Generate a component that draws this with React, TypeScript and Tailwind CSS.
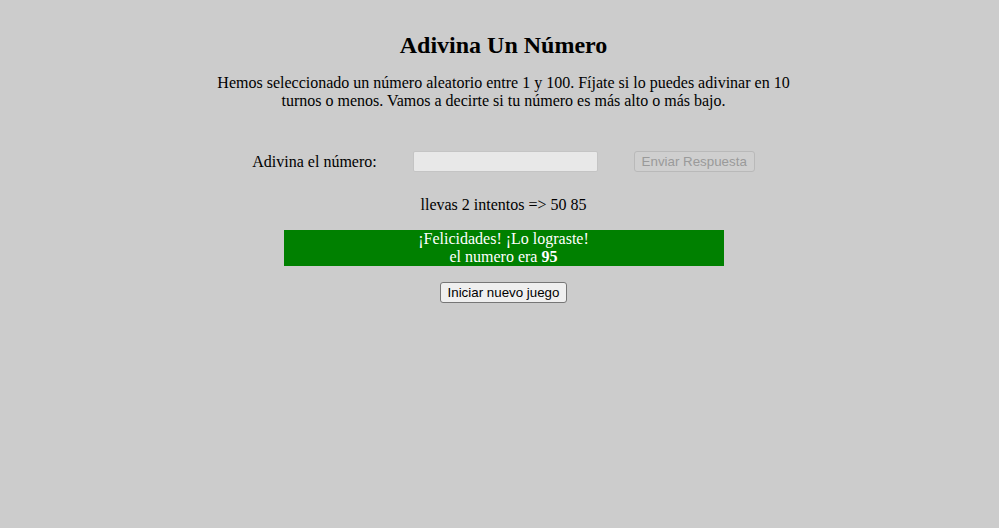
import React from "react";

export default function App() {
  return (
    <div
      className="min-h-[528px] w-full bg-[#cccccc] pl-2 text-black"
      style={{ fontFamily: '"Liberation Serif", "Times New Roman", serif' }}
    >
      <div className="flex flex-col items-center pt-[31px]">
        <h1 className="text-[24px] font-bold leading-[28px]">Adivina Un Número</h1>
        <p className="mt-[15px] w-[600px] text-center text-[16px] leading-[18px]">
          Hemos seleccionado un número aleatorio entre 1 y 100. Fíjate si lo puedes adivinar en 10 turnos o menos. Vamos a decirte si tu número es más alto o más bajo.
        </p>
        <div className="mt-[41px] flex h-[21px] items-center gap-9 text-[16px]">
          <label className="leading-[18px]">Adivina el número:</label>
          <input
            disabled
            className="h-[21px] w-[185px] rounded-[2px] border border-[#c4c4c4] bg-[#e8e8e8]"
          />
          <button
            disabled
            className="h-[21px] w-[121px] rounded-[3px] border border-[#b9b9b9] bg-[#cfcfcf] px-[6px] text-[13.33px] text-[#9a9a9a]"
            style={{ fontFamily: '"Liberation Sans", Arial, sans-serif' }}
          >
            Enviar Respuesta
          </button>
        </div>
        <p className="mt-[24px] text-[16px] leading-[18px]">llevas 2 intentos =&gt; 50 85</p>
        <div className="mt-[16px] flex h-[36px] w-[440px] flex-col items-center justify-center bg-[#008000] text-[16px] leading-[18px] text-white">
          <span>¡Felicidades! ¡Lo lograste!</span>
          <span>
            el numero era <b>95</b>
          </span>
        </div>
        <button
          className="mt-[16px] h-[21px] w-[127px] rounded-[3px] border border-[#767676] bg-[#efefef] text-[13.33px] leading-[15px] text-black"
          style={{ fontFamily: '"Liberation Sans", Arial, sans-serif' }}
        >
          Iniciar nuevo juego
        </button>
      </div>
    </div>
  );
}
